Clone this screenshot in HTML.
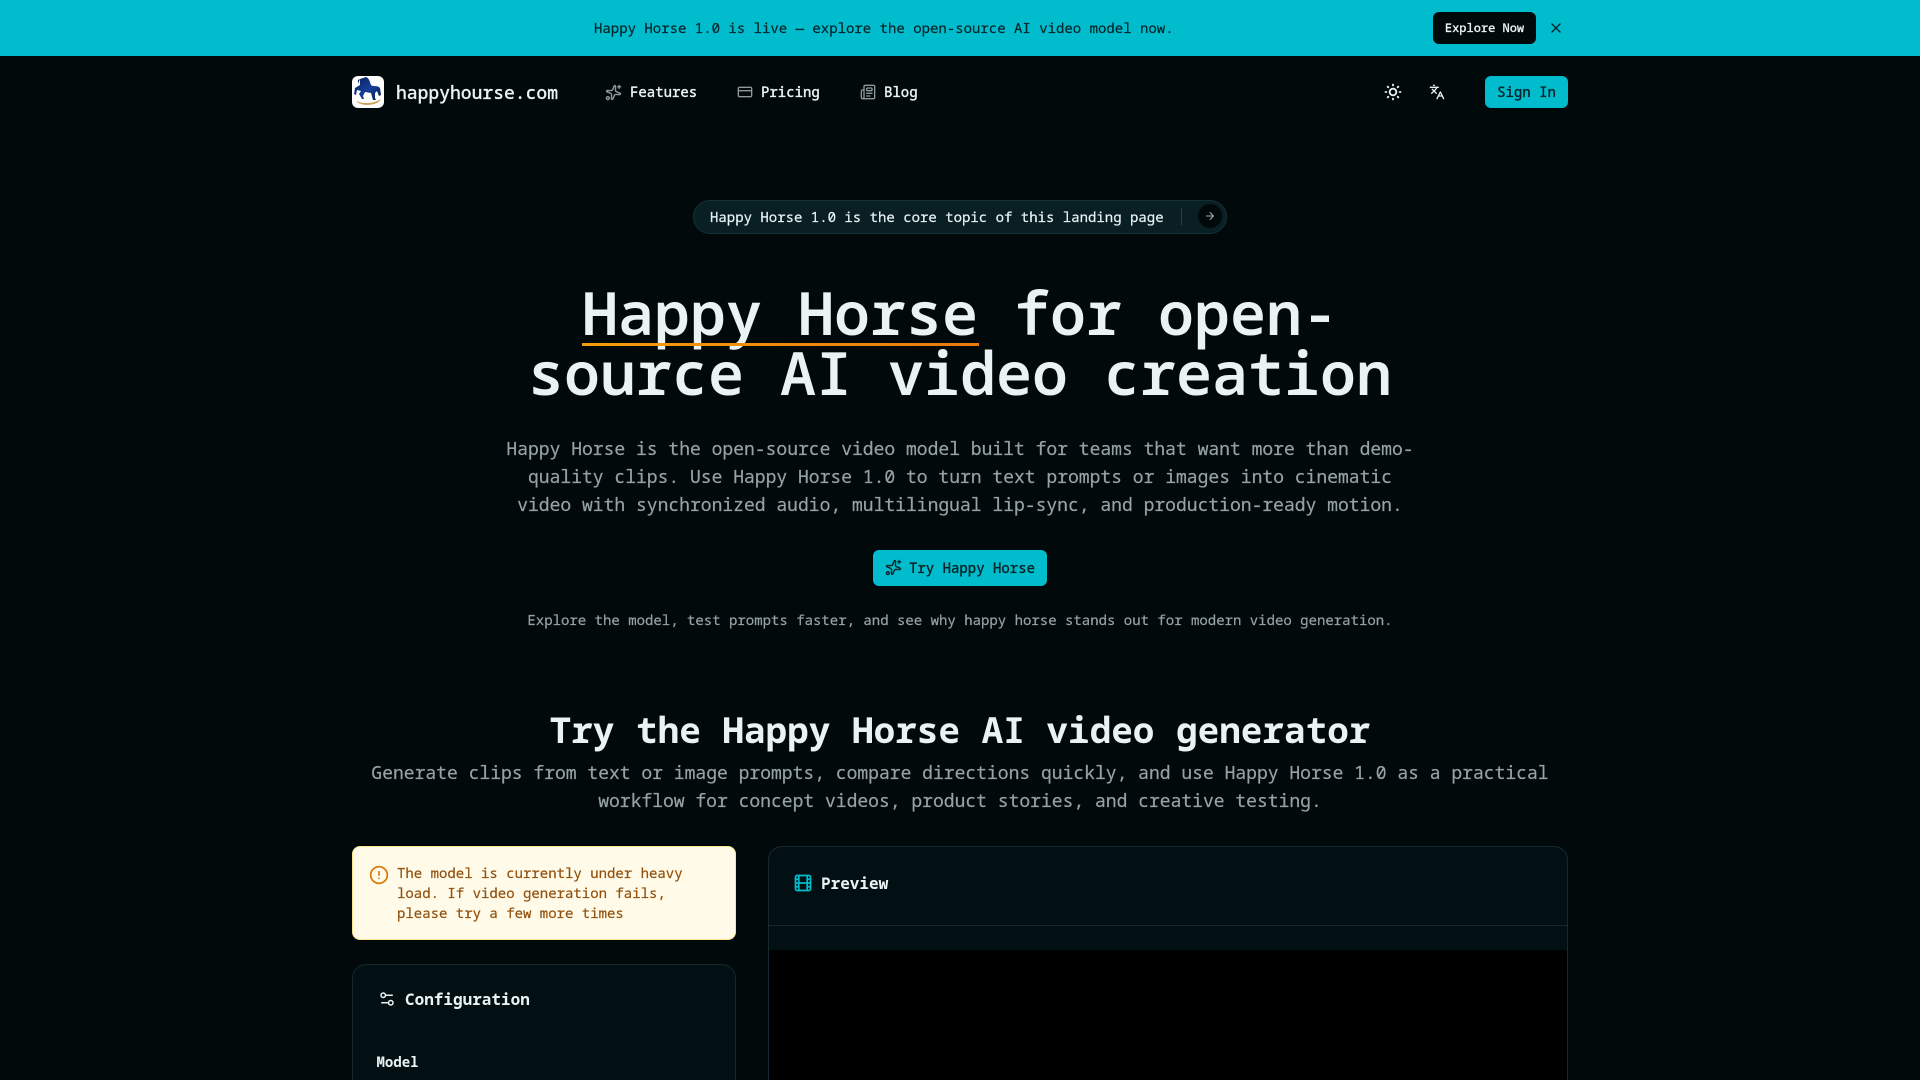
<!DOCTYPE html>
<html lang="en"><head><meta charset="utf-8"><title>Happy Horse</title>
<style>
*{box-sizing:border-box}
html,body{margin:0;padding:0;width:1920px;height:1080px;overflow:hidden;background:#02090b}
body{position:relative;font-family:"Noto Sans Mono","Noto Sans Mono CJK SC","DejaVu Sans Mono","Liberation Mono",monospace;color:#eaf3f4}
.a{position:absolute;white-space:nowrap}
.c{left:0;width:1920px;text-align:center}
.m{-webkit-text-stroke:.2px currentColor}
svg{display:block;fill:none;stroke:currentColor;stroke-width:2;stroke-linecap:round;stroke-linejoin:round}
</style></head><body>
<div class="a" style="left:0;top:0;width:1920px;height:56px;background:#00bccc"></div>
<div class="a m" style="left:594px;top:20px;font-size:14px;line-height:18px;color:#06252b">Happy Horse 1.0 is live — explore the open-source AI video model now.</div>
<div class="a m" style="left:1433px;top:12px;width:103px;height:32px;border-radius:6px;background:#02090b;color:#eaf3f4;font-size:12px;line-height:31px;text-align:center;font-weight:500">Explore Now</div>
<svg class="a" style="left:1548px;top:20px;color:#06252b" width="16" height="16" viewBox="0 0 24 24"><path d="M18 6 6 18M6 6l12 12"/></svg>

<svg class="a" style="left:352px;top:76px" width="32" height="32" viewBox="0 0 32 32">
<defs><linearGradient id="h" x1="0" y1="0" x2="1" y2="1"><stop offset="0" stop-color="#0a1f55"/><stop offset=".55" stop-color="#14409a"/><stop offset="1" stop-color="#081a48"/></linearGradient></defs>
<rect width="32" height="32" rx="6" fill="#fff" stroke="none"/>
<path d="M6 8 8 3l6-2c3 1 4 5 5 8 2 2 7 0 9 3l1 7-2 1-2-5-2 2 0 5 1 2-3 0-2-7-6-1-2 4 1 3-2 0-3-5 2-3-4-1-1 5-2-1 1-6 5-3 0-6-2 1z" fill="url(#h)" stroke="none"/>
<path d="M4 25c7 3 17 3 25-2-3 7-20 8-25 2z" fill="#cda35c" stroke="none"/>
</svg>
<div class="a m" style="left:396px;top:82px;font-size:18px;line-height:22px;color:#eaf3f4;font-weight:500">happyhourse.com</div>

<svg class="a" style="left:605px;top:84px;color:#8d9a9c" width="17" height="17" viewBox="0 0 24 24"><path d="M11.017 2.814a1 1 0 0 1 1.966 0l1.051 5.558a2 2 0 0 0 1.594 1.594l5.558 1.051a1 1 0 0 1 0 1.966l-5.558 1.051a2 2 0 0 0-1.594 1.594l-1.051 5.558a1 1 0 0 1-1.966 0l-1.051-5.558a2 2 0 0 0-1.594-1.594l-5.558-1.051a1 1 0 0 1 0-1.966l5.558-1.051a2 2 0 0 0 1.594-1.594z" transform="rotate(12 12 12)"/><path d="M20 2v4M22 4h-4"/><circle cx="4" cy="20" r="2"/></svg>
<div class="a m" style="left:630px;top:84px;font-size:14px;line-height:18px;font-weight:500">Features</div>
<svg class="a" style="left:737px;top:84px;color:#8d9a9c" width="16" height="16" viewBox="0 0 24 24"><rect x="2" y="5" width="20" height="14" rx="2"/><path d="M2 10h20"/></svg>
<div class="a m" style="left:761px;top:84px;font-size:14px;line-height:18px;font-weight:500">Pricing</div>
<svg class="a" style="left:860px;top:84px;color:#8d9a9c" width="16" height="16" viewBox="0 0 24 24"><path d="M4 22h16a2 2 0 0 0 2-2V4a2 2 0 0 0-2-2H8a2 2 0 0 0-2 2v16a2 2 0 0 1-4 0v-9c0-1.100.900-2 2-2h2"/><path d="M18 14h-8M15 18h-5"/><rect x="10" y="6" width="8" height="4" rx="1"/></svg>
<div class="a m" style="left:884px;top:84px;font-size:14px;line-height:18px;font-weight:500">Blog</div>

<svg class="a" style="left:1383px;top:82px;color:#eaf3f4;stroke-width:2.200" width="20" height="20" viewBox="0 0 24 24"><circle cx="12" cy="12" r="4"/><path d="M12 3v1M12 20v1M3 12h1M20 12h1M18.364 5.636l-.707.707M6.343 17.657l-.707.707M5.636 5.636l.707.707M17.657 17.657l.707.707"/></svg>
<svg class="a" style="left:1429px;top:84px;color:#eaf3f4" width="16" height="16" viewBox="0 0 24 24"><path d="m5 8 6 6M4 14l6-6 2-3M2 5h12M7 2h1M22 22l-5-10-5 10M14 18h6"/></svg>
<div class="a m" style="left:1485px;top:76px;width:83px;height:32px;border-radius:6px;background:#00bccc;color:#06252b;font-size:14px;line-height:33px;text-align:center;font-weight:500">Sign In</div>

<div class="a" style="left:693px;top:200px;width:534px;height:34px;border-radius:17px;background:#0a1f24;border:1px solid #15303a"></div>
<div class="a m" style="left:710px;top:209px;font-size:14px;line-height:18px;color:#eaf3f4">Happy Horse 1.0 is the core topic of this landing page</div>
<div class="a" style="left:1181px;top:208px;width:1px;height:17px;background:#2c4147"></div>
<div class="a" style="left:1198px;top:204px;width:24px;height:24px;border-radius:12px;background:#02090b"></div>
<svg class="a" style="left:1204px;top:210px;color:#a3b0b2" width="12" height="12" viewBox="0 0 24 24"><path d="M5 12h14M12 5l7 7-7 7"/></svg>

<div class="a c" style="top:282px;font-size:60px;line-height:60px;font-weight:640;color:#eaf3f4">Happy Horse for open-<br>source AI video creation</div>
<div class="a" style="left:582px;top:343px;width:397px;height:3px;background:linear-gradient(90deg,#f59e0b,#ea7a0c)"></div>

<div class="a c m" style="top:435px;font-size:18px;line-height:28px;color:#95a3a6">Happy Horse is the open-source video model built for teams that want more than demo-<br>quality clips. Use Happy Horse 1.0 to turn text prompts or images into cinematic<br>video with synchronized audio, multilingual lip-sync, and production-ready motion.</div>

<div class="a" style="left:873px;top:550px;width:174px;height:36px;border-radius:6px;background:#00bccc"></div>
<svg class="a" style="left:885px;top:559px;color:#06252b" width="17" height="17" viewBox="0 0 24 24"><path d="M11.017 2.814a1 1 0 0 1 1.966 0l1.051 5.558a2 2 0 0 0 1.594 1.594l5.558 1.051a1 1 0 0 1 0 1.966l-5.558 1.051a2 2 0 0 0-1.594 1.594l-1.051 5.558a1 1 0 0 1-1.966 0l-1.051-5.558a2 2 0 0 0-1.594-1.594l-5.558-1.051a1 1 0 0 1 0-1.966l5.558-1.051a2 2 0 0 0 1.594-1.594z" transform="rotate(12 12 12)"/><path d="M20 2v4M22 4h-4"/><circle cx="4" cy="20" r="2"/></svg>
<div class="a m" style="left:909px;top:560px;font-size:14px;line-height:18px;color:#06252b;font-weight:500">Try Happy Horse</div>

<div class="a c m" style="top:611px;font-size:14px;line-height:20px;color:#95a3a6">Explore the model, test prompts faster, and see why happy horse stands out for modern video generation.</div>

<div class="a c" style="top:710px;font-size:36px;line-height:40px;font-weight:700;color:#eaf3f4">Try the Happy Horse AI video generator</div>
<div class="a c m" style="top:759px;font-size:18px;line-height:28px;color:#95a3a6">Generate clips from text or image prompts, compare directions quickly, and use Happy Horse 1.0 as a practical<br>workflow for concept videos, product stories, and creative testing.</div>

<div class="a" style="left:352px;top:846px;width:384px;height:94px;border-radius:8px;background:#fffbe8;border:1px solid #fde68a"></div>
<svg class="a" style="left:369px;top:865px;color:#d97706" width="20" height="20" viewBox="0 0 24 24"><circle cx="12" cy="12" r="10"/><path d="M12 8v4M12 16h.01"/></svg>
<div class="a m" style="left:397px;top:864px;font-size:14px;line-height:20px;color:#92500e">The model is currently under heavy<br>load. If video generation fails,<br>please try a few more times</div>

<div class="a" style="left:352px;top:964px;width:384px;height:140px;border-radius:14px;background:#031013;border:1px solid #142a30"></div>
<svg class="a" style="left:378px;top:990px;color:#eaf3f4" width="18" height="18" viewBox="0 0 24 24"><path d="M14 17H5M19 7h-9"/><circle cx="17" cy="17" r="3"/><circle cx="7" cy="7" r="3"/></svg>
<div class="a" style="left:405px;top:989px;font-size:16px;line-height:20px;font-weight:700;color:#eaf3f4">Configuration</div>
<div class="a" style="left:376.500px;top:1054px;font-size:14px;line-height:18px;font-weight:700;color:#eaf3f4">Model</div>

<div class="a" style="left:768px;top:846px;width:800px;height:260px;border-radius:14px;background:#031013;border:1px solid #142a30"></div>
<div class="a" style="left:769px;top:925px;width:798px;height:1px;background:#142a30"></div>
<div class="a" style="left:769px;top:950px;width:798px;height:130px;background:#000"></div>
<svg class="a" style="left:793px;top:873px;color:#00bccc" width="20" height="20" viewBox="0 0 24 24"><rect x="3" y="3" width="18" height="18" rx="2"/><path d="M7 3v18M3 7.500h4M3 12h18M3 16.500h4M17 3v18M17 7.500h4M17 16.500h4"/></svg>
<div class="a" style="left:821px;top:873px;font-size:16px;line-height:20px;font-weight:700;color:#eaf3f4">Preview</div>
</body></html>
